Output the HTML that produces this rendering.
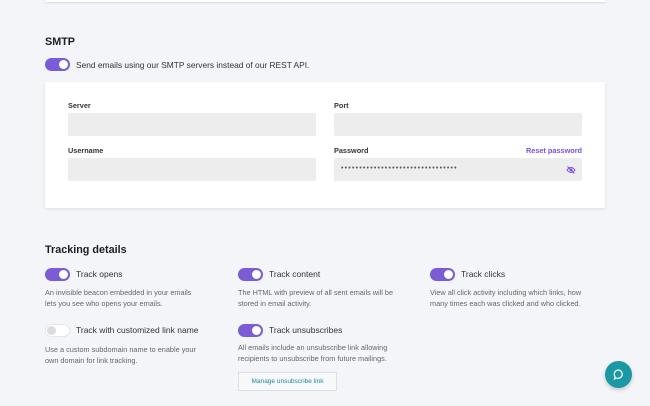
<!DOCTYPE html>
<html><head><style>
*{box-sizing:border-box;margin:0;padding:0}
body{width:650px;height:406px;background:#f4f5f9;font-family:"Liberation Sans",sans-serif;position:relative;overflow:hidden;color:#222}
.abs{position:absolute}
.topcard{left:45px;top:-10px;width:560px;height:12px;background:#fff;box-shadow:0 1px 2px rgba(0,0,0,.12)}
h2{position:absolute;font-size:10.8px;font-weight:bold;color:#1d1d1f}
.tg{position:absolute;width:25px;height:13px;border-radius:7px;background:#7b5cd6}
.tg::after{content:"";position:absolute;right:2px;top:2px;width:9px;height:9px;border-radius:50%;background:#fff}
.tg.off{background:#fff;border:1px solid #e6e6ea}
.tg.off::after{left:1px;right:auto;top:1px;background:#dcdce0}
.lbl{position:absolute;font-size:8.5px;color:#333}
.desc{position:absolute;font-size:7.3px;line-height:10.5px;color:#666}
.card{left:45px;top:82px;width:560px;height:126px;background:#fff;box-shadow:0 1px 3px rgba(0,0,0,.1)}
.fl{position:absolute;font-size:7.3px;font-weight:bold;color:#333}
.in{position:absolute;height:23px;background:#ededed;border-radius:2px}
</style></head><body>
<div class="abs topcard"></div>
<h2 style="left:45px;top:36px">SMTP</h2>
<div class="tg" style="left:45px;top:58px"></div>
<div class="lbl" style="left:76px;top:60px;font-size:8.4px">Send emails using our SMTP servers instead of our REST API.</div>
<div class="abs card"></div>
<div class="fl" style="left:68px;top:101px">Server</div>
<div class="in" style="left:68px;top:113px;width:248px"></div>
<div class="fl" style="left:68px;top:146px">Username</div>
<div class="in" style="left:68px;top:158px;width:248px"></div>
<div class="fl" style="left:334px;top:101px">Port</div>
<div class="in" style="left:334px;top:113px;width:248px"></div>
<div class="fl" style="left:334px;top:146px">Password</div>
<div class="fl" style="left:482px;width:100px;text-align:right;top:146px;color:#7b4fe0">Reset password</div>
<div class="in" style="left:334px;top:158px;width:248px"></div>
<div class="abs" style="left:341px;top:165px;font-size:7px;letter-spacing:1.2px;color:#555">••••••••••••••••••••••••••••••••</div>
<svg class="abs" style="left:566px;top:165px" width="10" height="10" viewBox="0 0 10 10"><path d="M1 5 Q5 0 9 5 Q5 10 1 5Z" fill="none" stroke="#7b4fe0" stroke-width="1"/><circle cx="5" cy="5" r="1.5" fill="#7b4fe0"/><path d="M1.5 1.5 L8.5 8.5" stroke="#7b4fe0" stroke-width="1"/></svg>

<h2 style="left:45px;top:244px">Tracking details</h2>
<div class="tg" style="left:45px;top:268px"></div>
<div class="lbl" style="left:76px;top:269px">Track opens</div>
<div class="desc" style="left:45px;top:288px">An invisible beacon embedded in your emails<br>lets you see who opens your emails.</div>
<div class="tg" style="left:238px;top:268px"></div>
<div class="lbl" style="left:269px;top:269px">Track content</div>
<div class="desc" style="left:238px;top:288px">The HTML with preview of all sent emails will be<br>stored in email activity.</div>
<div class="tg" style="left:430px;top:268px"></div>
<div class="lbl" style="left:461px;top:269px">Track clicks</div>
<div class="desc" style="left:430px;top:288px">View all click activity including which links, how<br>many times each was clicked and who clicked.</div>
<div class="tg off" style="left:45px;top:324px"></div>
<div class="lbl" style="left:76px;top:325px">Track with customized link name</div>
<div class="desc" style="left:45px;top:345px">Use a custom subdomain name to enable your<br>own domain for link tracking.</div>
<div class="tg" style="left:238px;top:324px"></div>
<div class="lbl" style="left:269px;top:325px">Track unsubscribes</div>
<div class="desc" style="left:238px;top:343px">All emails include an unsubscribe link allowing<br>recipients to unsubscribe from future mailings.</div>
<div class="abs" style="left:238px;top:372px;width:99px;height:19px;border:1px solid #dedee3;background:#f7f8fa;font-size:6.5px;color:#1b8a9a;text-align:center;line-height:17px">Manage unsubscribe link</div>
<div class="abs" style="left:605px;top:361px;width:27px;height:27px;border-radius:50%;background:#1a98a3;box-shadow:0 2px 4px rgba(0,0,0,.2)"></div>
<svg class="abs" style="left:612px;top:368px" width="13" height="13" viewBox="0 0 13 13"><path d="M6.5 2 A4.5 4.2 0 1 1 4 10 L2.5 11 L3 8.5 A4.5 4.2 0 0 1 6.5 2Z" fill="none" stroke="#fff" stroke-width="1.2"/></svg>
</body></html>
